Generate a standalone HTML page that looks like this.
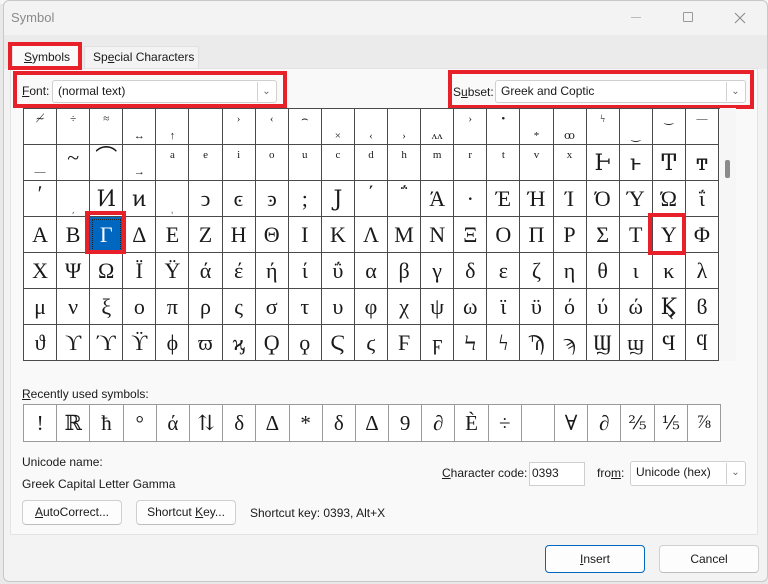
<!DOCTYPE html>
<html><head><meta charset="utf-8"><style>
*{margin:0;padding:0;box-sizing:border-box}
body{width:768px;height:584px;overflow:hidden;background:#e9e9e9;font-family:"Segoe UI","Liberation Sans","DejaVu Sans",sans-serif;font-size:12px;color:#1a1a1a;position:relative}
.a{position:absolute}
.dlg{left:3px;top:0;width:765px;height:582px;background:#f3f3f3;border:1px solid #c8c8c8;border-radius:6px}
.panel{left:10px;top:68px;width:748px;height:467px;background:#f9f9f9;border:1px solid #e3e3e3}
.red{position:absolute;border:4px solid #e8202a}
.sel{background:#fff;border:1px solid #cfcfcf;border-radius:3px;height:23px;padding:3px 5px;font-size:12px}
.dd{position:absolute;right:1px;top:1px;width:18px;height:19px;border-left:1px solid #d0d0d0;text-align:center;color:#666;font-size:10px;line-height:19px}
table{border-collapse:collapse;table-layout:fixed;font-family:"Liberation Serif","DejaVu Serif",serif}
#g td{width:33.1px;height:36px;border:1px solid #4a4a4a;background:#fff;text-align:center;font-size:22px;line-height:1;padding:0;vertical-align:middle;overflow:hidden;white-space:nowrap}
#g td.t{font-size:11px;vertical-align:top;padding-top:5px}
#g td.b{font-size:11px;vertical-align:bottom;padding-bottom:2px}
#g td.m{font-size:22px;vertical-align:top;padding-top:2px}
#g td.s{background:#0067c0;color:#fff;outline:1px dotted #222;outline-offset:-3px}
#r td{width:33.2px;height:37px;border:1px solid #9a9a9a;background:#fff;text-align:center;font-size:21px;padding:0}
#r td.f{font-size:19px}
.btn{position:absolute;background:#fdfdfd;border:1px solid #d0d0d0;border-bottom-color:#bdbdbd;border-radius:4px;text-align:center;font-size:12px;line-height:23px}
u{text-decoration:underline}
</style></head><body>
<div class="a" style="left:0;top:0;width:768px;height:4px;background:#f6f6f6"></div>
<div class="a dlg"></div>
<div class="a" style="left:11px;top:10px;color:#8a8a8a;font-size:13px">Symbol</div>
<div class="a" style="left:631px;top:17px;width:10px;height:1px;background:#bbb"></div>
<div class="a" style="left:683px;top:12px;width:10px;height:10px;border:1px solid #999;border-radius:1px"></div>
<svg class="a" style="left:734px;top:12px" width="12" height="12"><path d="M1 1L11 11M11 1L1 11" stroke="#888" stroke-width="1"/></svg>
<div class="a" style="left:4px;top:35px;width:763px;height:34px;background:#ebebeb"></div>
<div class="a" style="left:12px;top:45px;width:70px;height:24px;background:#f9f9f9;border:1px solid #e0e0e0;border-bottom:none"></div>
<div class="a" style="left:24px;top:50px;font-size:12px"><u>S</u>ymbols</div>
<div class="a" style="left:84px;top:46px;width:115px;height:22px;background:#f3f3f3;border:1px solid #e0e0e0;border-bottom:none"></div>
<div class="a" style="left:93px;top:50px;font-size:12px">Sp<u>e</u>cial Characters</div>
<div class="a panel"></div>
<div class="red" style="left:8px;top:42px;width:74px;height:28px"></div>
<div class="a" style="left:22px;top:84px"><u>F</u>ont:</div>
<div class="a sel" style="left:52px;top:80px;width:225px">(normal text)<div class="dd">&#8964;</div></div>
<div class="red" style="left:13px;top:71px;width:274px;height:37px"></div>
<div class="a" style="left:453px;top:85px">S<u>u</u>bset:</div>
<div class="a sel" style="left:495px;top:80px;width:251px">Greek and Coptic<div class="dd">&#8964;</div></div>
<div class="red" style="left:448px;top:70px;width:306px;height:39px"></div>

<table id="g" class="a" style="left:23px;top:108px;width:696px">
<tr><td class="t">≁</td><td class="t">÷</td><td class="t">≈</td><td class="b">↔</td><td class="b">↑</td><td></td><td class="t">›</td><td class="t">‹</td><td class="t">⌢</td><td class="b">×</td><td class="b">‹</td><td class="b">›</td><td class="b">ʌʌ</td><td class="t">›</td><td class="t">•</td><td class="b">*</td><td class="b">ꝏ</td><td class="t">ϟ</td><td class="b">‿</td><td class="t">‿</td><td class="t">—</td></tr>
<tr><td class="b">—</td><td class="m">~</td><td class="m">⌒</td><td class="b">→</td><td class="t">a</td><td class="t">e</td><td class="t">i</td><td class="t">o</td><td class="t">u</td><td class="t">c</td><td class="t">d</td><td class="t">h</td><td class="t">m</td><td class="t">r</td><td class="t">t</td><td class="t">v</td><td class="t">x</td><td>Ͱ</td><td>ͱ</td><td>Ͳ</td><td>ͳ</td></tr>
<tr><td class="m">ʹ</td><td class="b">͵</td><td>Ͷ</td><td>ͷ</td><td class="b">ͺ</td><td>ͻ</td><td>ͼ</td><td>ͽ</td><td>;</td><td>Ϳ</td><td class="m">΄</td><td class="m">΅</td><td>Ά</td><td>·</td><td>Έ</td><td>Ή</td><td>Ί</td><td>Ό</td><td>Ύ</td><td>Ώ</td><td>ΐ</td></tr>
<tr><td>Α</td><td>Β</td><td class="s">Γ</td><td>Δ</td><td>Ε</td><td>Ζ</td><td>Η</td><td>Θ</td><td>Ι</td><td>Κ</td><td>Λ</td><td>Μ</td><td>Ν</td><td>Ξ</td><td>Ο</td><td>Π</td><td>Ρ</td><td>Σ</td><td>Τ</td><td>Υ</td><td>Φ</td></tr>
<tr><td>Χ</td><td>Ψ</td><td>Ω</td><td>Ϊ</td><td>Ϋ</td><td>ά</td><td>έ</td><td>ή</td><td>ί</td><td>ΰ</td><td>α</td><td>β</td><td>γ</td><td>δ</td><td>ε</td><td>ζ</td><td>η</td><td>θ</td><td>ι</td><td>κ</td><td>λ</td></tr>
<tr><td>μ</td><td>ν</td><td>ξ</td><td>ο</td><td>π</td><td>ρ</td><td>ς</td><td>σ</td><td>τ</td><td>υ</td><td>φ</td><td>χ</td><td>ψ</td><td>ω</td><td>ϊ</td><td>ϋ</td><td>ό</td><td>ύ</td><td>ώ</td><td>Ϗ</td><td>ϐ</td></tr>
<tr><td>ϑ</td><td>ϒ</td><td>ϓ</td><td>ϔ</td><td>ϕ</td><td>ϖ</td><td>ϗ</td><td>Ϙ</td><td>ϙ</td><td>Ϛ</td><td>ϛ</td><td>Ϝ</td><td>ϝ</td><td>Ϟ</td><td>ϟ</td><td>Ϡ</td><td>ϡ</td><td>Ϣ</td><td>ϣ</td><td>Ϥ</td><td>ϥ</td></tr>
</table>
<div class="a" style="left:720px;top:108px;width:16px;height:253px;background:#f6f6f6"></div>
<div class="a" style="left:725px;top:160px;width:5px;height:18px;background:#8a8a8a;border-radius:2px"></div>
<div class="red" style="left:85px;top:211px;width:41px;height:43px"></div>
<div class="red" style="left:648px;top:213px;width:38px;height:42px"></div>

<div class="a" style="left:22px;top:387px"><u>R</u>ecently used symbols:</div>
<table id="r" class="a" style="left:23px;top:404px;width:697px">
<tr><td>!</td><td>ℝ</td><td>ħ</td><td>°</td><td>ά</td><td>⇅</td><td>δ</td><td>Δ</td><td>*</td><td>δ</td><td>Δ</td><td>9</td><td>∂</td><td>È</td><td>÷</td><td></td><td>∀</td><td>∂</td><td class="f">⅖</td><td class="f">⅕</td><td class="f">⅞</td></tr>
</table>
<div class="a" style="left:22px;top:455px">Unicode name:</div>
<div class="a" style="left:22px;top:477px">Greek Capital Letter Gamma</div>
<div class="a" style="left:442px;top:466px"><u>C</u>haracter code:</div>
<div class="a" style="left:529px;top:462px;width:56px;height:24px;background:#fff;border:1px solid #cfcfcf;padding:3px 2px">0393</div>
<div class="a" style="left:597px;top:466px">fro<u>m</u>:</div>
<div class="a sel" style="left:630px;top:461px;width:116px;height:25px">Unicode (hex)<div class="dd" style="height:21px">&#8964;</div></div>
<div class="btn" style="left:22px;top:500px;width:100px;height:25px"><u>A</u>utoCorrect...</div>
<div class="btn" style="left:136px;top:500px;width:100px;height:25px">Shortcut <u>K</u>ey...</div>
<div class="a" style="left:250px;top:506px">Shortcut key: 0393, Alt+X</div>
<div class="btn" style="left:545px;top:545px;width:100px;height:28px;line-height:26px;border:1px solid #0067c0"><u>I</u>nsert</div>
<div class="btn" style="left:659px;top:545px;width:100px;height:28px;line-height:26px">Cancel</div>
</body></html>
